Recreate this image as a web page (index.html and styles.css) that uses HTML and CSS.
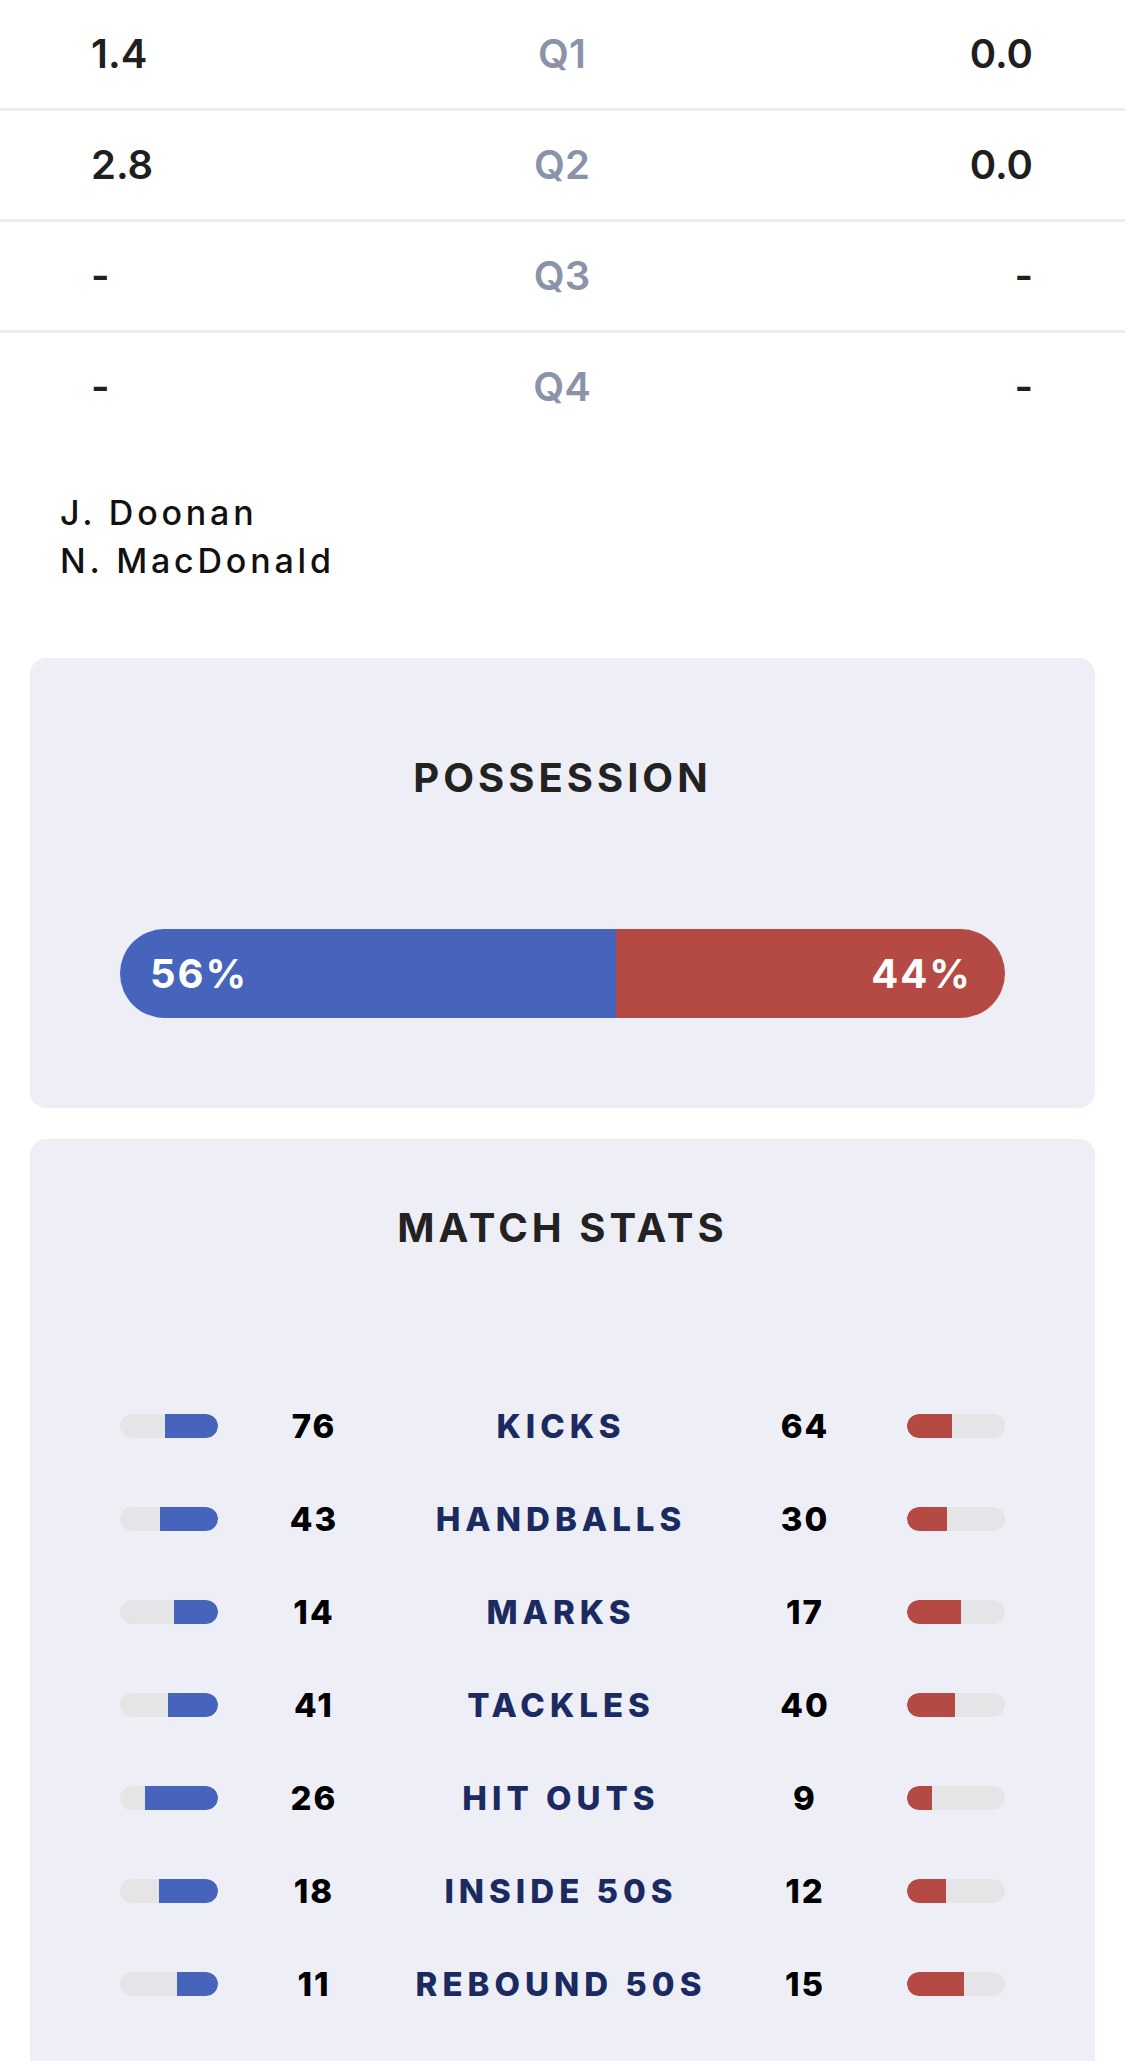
FILE: index.html
```html
<!DOCTYPE html>
<html lang="en">
<head>
<meta charset="utf-8">
<title>Match Centre</title>
<link rel="stylesheet" href="styles.css">
</head>
<body>
<div class="quarters">
  <div class="qrow"><span class="score home">1.4</span><span class="qlabel">Q1</span><span class="score away">0.0</span></div>
  <div class="qrow"><span class="score home">2.8</span><span class="qlabel">Q2</span><span class="score away">0.0</span></div>
  <div class="qrow"><span class="score home">-</span><span class="qlabel">Q3</span><span class="score away">-</span></div>
  <div class="qrow last"><span class="score home">-</span><span class="qlabel">Q4</span><span class="score away">-</span></div>
</div>

<div class="umpires">
  <div class="umpire">J. Doonan</div>
  <div class="umpire">N. MacDonald</div>
</div>

<section class="card possession">
  <h2 class="card-title">POSSESSION</h2>
  <div class="poss-bar">
    <div class="poss-home" style="width:56%"><span>56%</span></div>
    <div class="poss-away"><span>44%</span></div>
  </div>
</section>

<section class="card stats">
  <h2 class="card-title">MATCH STATS</h2>
  <div class="stat-rows">
    <div class="stat-row">
      <div class="track home"><div class="fill" style="width:54.3%"></div></div>
      <span class="num">76</span><span class="label">KICKS</span><span class="num">64</span>
      <div class="track away"><div class="fill" style="width:45.7%"></div></div>
    </div>
    <div class="stat-row">
      <div class="track home"><div class="fill" style="width:58.9%"></div></div>
      <span class="num">43</span><span class="label">HANDBALLS</span><span class="num">30</span>
      <div class="track away"><div class="fill" style="width:41.1%"></div></div>
    </div>
    <div class="stat-row">
      <div class="track home"><div class="fill" style="width:45.2%"></div></div>
      <span class="num">14</span><span class="label">MARKS</span><span class="num">17</span>
      <div class="track away"><div class="fill" style="width:54.8%"></div></div>
    </div>
    <div class="stat-row">
      <div class="track home"><div class="fill" style="width:50.6%"></div></div>
      <span class="num">41</span><span class="label">TACKLES</span><span class="num">40</span>
      <div class="track away"><div class="fill" style="width:49.4%"></div></div>
    </div>
    <div class="stat-row">
      <div class="track home"><div class="fill" style="width:74.3%"></div></div>
      <span class="num">26</span><span class="label">HIT OUTS</span><span class="num">9</span>
      <div class="track away"><div class="fill" style="width:25.7%"></div></div>
    </div>
    <div class="stat-row">
      <div class="track home"><div class="fill" style="width:60%"></div></div>
      <span class="num">18</span><span class="label">INSIDE 50S</span><span class="num">12</span>
      <div class="track away"><div class="fill" style="width:40%"></div></div>
    </div>
    <div class="stat-row">
      <div class="track home"><div class="fill" style="width:42.3%"></div></div>
      <span class="num">11</span><span class="label">REBOUND 50S</span><span class="num">15</span>
      <div class="track away"><div class="fill" style="width:57.7%"></div></div>
    </div>
  </div>
</section>
</body>
</html>
```

FILE: styles.css
```css
* { box-sizing: border-box; }

body {
  margin: 0;
  background: #ffffff;
  font-family: Inter, "Noto Sans", "Liberation Sans", sans-serif;
  color: #222222;
}

/* Quarter-by-quarter scores */
.quarters {
  display: flex;
  flex-direction: column;
}

.qrow {
  display: grid;
  grid-template-columns: 1fr auto 1fr;
  align-items: center;
  height: 111px;
  padding: 0 92px 0 91px;
  border-bottom: 3px solid #ededf1;
  font-size: 40px;
  line-height: 48px;
  font-weight: 600;
}

.qrow.last {
  border-bottom: none;
  height: 108px;
}

.score { color: #1f1f1f; }
.score.home { justify-self: start; }
.score.away { justify-self: end; }

.qlabel {
  color: #8a93a8;
  text-align: center;
}

/* Umpires */
.umpires {
  margin-top: 48px;
  padding-left: 60px;
  font-size: 34px;
  line-height: 48px;
  font-weight: 500;
  letter-spacing: 3.8px;
  color: #111111;
}

/* Cards */
.card {
  margin: 0 30px;
  background: #eeeff6;
  border-radius: 16px;
  padding: 0 90px;
}

.card-title {
  margin: 0;
  text-align: center;
  font-size: 40px;
  line-height: 48px;
  font-weight: 700;
  letter-spacing: 4px;
  color: #222222;
}

.possession {
  margin-top: 73px;
  padding-top: 96px;
  padding-bottom: 90px;
}

.poss-bar {
  margin-top: 127px;
  display: flex;
  height: 89px;
  border-radius: 45px;
  overflow: hidden;
  font-size: 40px;
  font-weight: 700;
  letter-spacing: 2px;
  color: #ffffff;
}

.poss-home {
  background: #4664bc;
  display: flex;
  align-items: center;
  padding-left: 30px;
}

.poss-away {
  flex: 1;
  background: #b54a45;
  display: flex;
  align-items: center;
  justify-content: flex-end;
  padding-right: 33px;
}

.stats {
  margin-top: 31px;
  padding-top: 65px;
  padding-bottom: 60px;
}

.stat-rows {
  margin-top: 127px;
  display: flex;
  flex-direction: column;
}

.stat-row {
  display: grid;
  grid-template-columns: 98px 192px 302px 186px 107px;
  align-items: center;
  height: 93px;
  font-size: 33px;
  font-weight: 800;
}

.num {
  text-align: center;
  color: #000000;
  letter-spacing: 2px;
}

.label {
  text-align: center;
  color: #1b2a60;
  letter-spacing: 5px;
  white-space: nowrap;
}

.track {
  display: flex;
  width: 98px;
  height: 24px;
  border-radius: 12px;
  background: #e5e5e8;
  overflow: hidden;
}

.track.home { justify-content: flex-end; }
.track.home .fill {
  background: #4664bc;
  border-radius: 0 12px 12px 0;
}

.track.away {
  justify-self: end;
  justify-content: flex-start;
}
.track.away .fill {
  background: #b54a45;
  border-radius: 12px 0 0 12px;
}
```
